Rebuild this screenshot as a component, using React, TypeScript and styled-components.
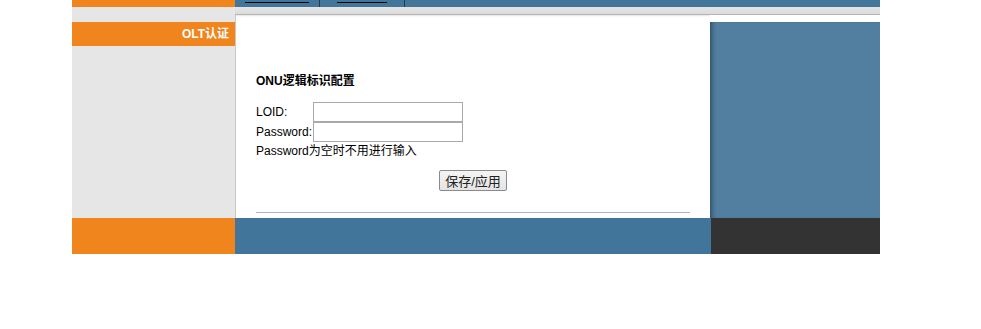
import React from "react";
import styled, { createGlobalStyle } from "styled-components";

const GlobalStyle = createGlobalStyle`
  body {
    margin: 0;
    background: #ffffff;
    font-family: "Liberation Sans", Arial, "Noto Sans CJK SC", sans-serif;
    font-size: 12px;
    color: #000;
  }
`;

const Page = styled.div`
  width: 808px;
  margin-left: 72px;
`;

const TopStrip = styled.div`
  display: grid;
  grid-template-columns: 163px 1fr;
  height: 7px;
  overflow: hidden;
`;

const OrangeCell = styled.div`
  background: #f0841d;
`;

const TabBar = styled.div`
  display: flex;
  background: #42769a;
`;

const Tab = styled.div`
  width: 84px;
  height: 7px;
  border-right: 1px solid #1f3d52;
  display: flex;
  justify-content: center;
  align-items: flex-start;
`;

const TabUnderline = styled.span<{ $w: number }>`
  display: block;
  width: ${(p) => p.$w}px;
  height: 2px;
  border-bottom: 1px solid #000;
`;

const Body = styled.div`
  display: grid;
  grid-template-columns: 163px 1fr;
  height: 211px;
  background: #e6e6e6;
`;

const Sidebar = styled.div`
  padding-top: 15px;
`;

const MenuItem = styled.div`
  height: 24px;
  background: #f0841d;
  color: #fff;
  font-weight: bold;
  text-align: right;
  padding-right: 6px;
  line-height: 25px;
`;

const MainArea = styled.div`
  display: flex;
  flex-direction: column;
`;

const ShadeBar = styled.div`
  height: 7px;
  background: linear-gradient(#e4e4e4, #dcdcdc);
  border-bottom: 1px solid #b4b4b4;
`;

const MainRow = styled.div`
  flex: 1;
  display: grid;
  grid-template-columns: 475px 1fr;
  background: #fff;
`;

const Panel = styled.div`
  border-left: 1px solid #c8c8c8;
  padding: 0 20px;
  box-shadow: inset 0 2px 2px -1px #e6e6e6;
`;

const Title = styled.div`
  margin-top: 58px;
  font-weight: bold;
  line-height: 16px;
`;

const FieldRow = styled.div<{ $top: number }>`
  display: flex;
  align-items: center;
  height: 20px;
  margin-top: ${(p) => p.$top}px;
`;

const Label = styled.span`
  width: 57px;
`;

const TextInput = styled.input`
  box-sizing: border-box;
  width: 150px;
  height: 20px;
  border: 1px solid #a9a9a9;
  padding: 1px 2px;
  font: inherit;
`;

const Hint = styled.div`
  margin-top: 1px;
  line-height: 16px;
`;

const ButtonRow = styled.div`
  display: flex;
  justify-content: center;
  margin-top: 11px;
`;

const SaveButton = styled.button`
  box-sizing: border-box;
  width: 68px;
  height: 21px;
  padding: 0;
  border: 1px solid #8a8a8a;
  border-radius: 2px;
  background: linear-gradient(#f4f4f4, #e4e4e4);
  font-family: "Liberation Sans", Arial, "Noto Sans CJK SC", sans-serif;
  font-size: 13px;
  color: #222;
`;

const Rule = styled.hr`
  margin: 21px 0 0;
  border: 0;
  border-top: 1px solid #b4b4b4;
`;

const RightCol = styled.div`
  padding-top: 7px;
  display: flex;
`;

const BluePanel = styled.div`
  flex: 1;
  background: #527e9f;
  box-shadow: inset 5px 0 4px -3px #2f4f66;
`;

const Footer = styled.div`
  display: grid;
  grid-template-columns: 163px 476px 1fr;
  height: 36px;
`;

const FooterCell = styled.div<{ $bg: string }>`
  background: ${(p) => p.$bg};
`;

export default function App() {
  return (
    <Page>
      <GlobalStyle />
      <TopStrip>
        <OrangeCell />
        <TabBar>
          <Tab>
            <TabUnderline $w={64} />
          </Tab>
          <Tab>
            <TabUnderline $w={50} />
          </Tab>
        </TabBar>
      </TopStrip>
      <Body>
        <Sidebar>
          <MenuItem>OLT认证</MenuItem>
        </Sidebar>
        <MainArea>
          <ShadeBar />
          <MainRow>
            <Panel>
              <Title>ONU逻辑标识配置</Title>
              <FieldRow $top={13}>
                <Label>LOID:</Label>
                <TextInput type="text" />
              </FieldRow>
              <FieldRow $top={0}>
                <Label>Password:</Label>
                <TextInput type="password" />
              </FieldRow>
              <Hint>Password为空时不用进行输入</Hint>
              <ButtonRow>
                <SaveButton>保存/应用</SaveButton>
              </ButtonRow>
              <Rule />
            </Panel>
            <RightCol>
              <BluePanel />
            </RightCol>
          </MainRow>
        </MainArea>
      </Body>
      <Footer>
        <FooterCell $bg="#f0841d" />
        <FooterCell $bg="#41759a" />
        <FooterCell $bg="#333333" />
      </Footer>
    </Page>
  );
}
